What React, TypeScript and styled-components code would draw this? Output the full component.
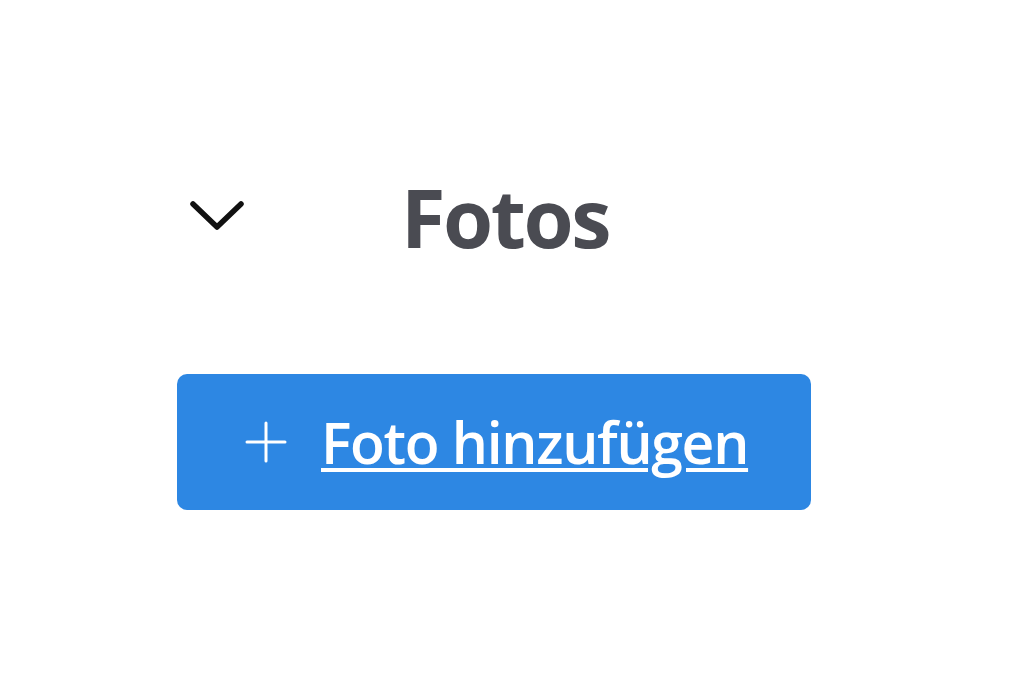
import React from "react";
import styled, { createGlobalStyle } from "styled-components";

const Global = createGlobalStyle`
  html, body { margin: 0; padding: 0; background: #ffffff; }
  body { font-family: "Open Sans", "Liberation Sans", sans-serif; }
`;

const Page = styled.div`
  width: 1024px;
  height: 683px;
  box-sizing: border-box;
  padding: 166px 0 0 177px;
  display: flex;
  flex-direction: column;
`;

const Header = styled.div`
  display: flex;
  align-items: center;
  height: 100px;
`;

const Toggle = styled.button`
  border: none;
  background: none;
  padding: 0;
  margin-left: 12px;
  width: 58px;
  height: 36px;
  display: flex;
  align-items: center;
  justify-content: center;
  cursor: pointer;
`;

const Title = styled.h2`
  margin: 0 0 0 154px;
  font-size: 81px;
  font-weight: 700;
  color: #4a4b52;
  line-height: 1;
  letter-spacing: -2.4px;
`;

const AddButton = styled.button`
  margin-top: 108px;
  width: 634px;
  height: 136px;
  border: none;
  border-radius: 10px;
  background: #2d87e3;
  color: #ffffff;
  display: flex;
  align-items: center;
  padding: 0 0 0 68px;
  box-sizing: border-box;
  cursor: pointer;
  font-family: inherit;
`;

const Label = styled.span`
  margin-left: 34px;
  font-size: 57px;
  font-weight: 600;
  text-decoration: underline;
  text-decoration-thickness: 4px;
  text-underline-offset: 4px;
  letter-spacing: -1.3px;
  line-height: 1;
`;

const Chevron = () => (
  <svg width="58" height="36" viewBox="0 0 58 36" fill="none">
    <path d="M4 6 L28 29 L52 6" stroke="#111111" strokeWidth="5.5" strokeLinecap="round" strokeLinejoin="round" />
  </svg>
);

const Plus = () => (
  <svg width="42" height="42" viewBox="0 0 42 42" fill="none">
    <path d="M21 2 V40 M2 21 H40" stroke="#ffffff" strokeWidth="3" strokeLinecap="round" />
  </svg>
);

export default function App() {
  return (
    <>
      <Global />
      <Page>
        <Header>
          <Toggle aria-label="Einklappen">
            <Chevron />
          </Toggle>
          <Title>Fotos</Title>
        </Header>
        <AddButton>
          <Plus />
          <Label>Foto hinzufügen</Label>
        </AddButton>
      </Page>
    </>
  );
}
